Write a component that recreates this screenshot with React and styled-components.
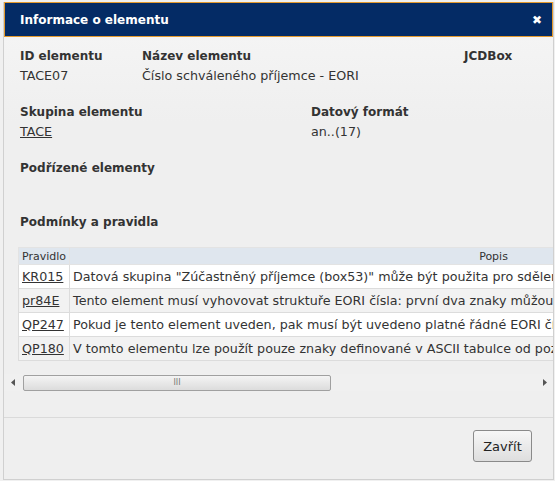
import React from "react";
import styled, { createGlobalStyle } from "styled-components";

const Global = createGlobalStyle`
  html, body { margin: 0; padding: 0; background: #f0f0f0; }
  body { font-family: "DejaVu Sans", Verdana, sans-serif; font-size: 12.7px; color: #333; }
`;

const Dialog = styled.div`
  width: 551px;
  height: 478px;
  margin: 2px 0 0 3px;
  border: 1px solid #d0d0d0;
  border-top: none;
  box-sizing: border-box;
  background: linear-gradient(#f6f6f6, #efefef 120px);
  display: flex;
  flex-direction: column;
  overflow: hidden;
`;

const TitleBar = styled.div`
  height: 35px;
  box-sizing: border-box;
  background: #042b65;
  border: 1px solid #e49a2e;
  display: flex;
  align-items: center;
  justify-content: space-between;
  padding: 0 10px 0 15px;
  color: #fff;
  font-weight: bold;
  font-size: 12px;
`;

const Close = styled.span`
  font-size: 12px;
  line-height: 1;
`;

const Body = styled.div`
  flex: 1;
  display: flex;
  flex-direction: column;
  padding: 10px 0 0 16px;
  line-height: 19px;
`;

const InfoRow = styled.div`
  display: grid;
  grid-template-columns: ${(p) => p.$cols};
  margin-bottom: ${(p) => p.$mb || 0}px;
`;

const Label = styled.div`
  font-weight: bold;
  font-size: 12px;
`;

const Value = styled.div``;

const Link = styled.a`
  color: #333;
  text-decoration: underline;
`;

const SectionTitle = styled.div`
  font-weight: bold;
  font-size: 12px;
  margin-bottom: ${(p) => p.$mb || 0}px;
`;

const TableScroll = styled.div`
  overflow: hidden;
  margin-left: -2px;
`;

const Table = styled.table`
  width: 900px;
  border-collapse: collapse;
  white-space: nowrap;
`;

const Th = styled.th`
  background: #dfe6ee;
  font-weight: normal;
  font-size: 11px;
  color: #333;
  height: 16px;
  line-height: 15px;
  padding: 0 3px;
  text-align: ${(p) => p.$align || "left"};
  border: 1px solid #e3e3e3;
`;

const Tr = styled.tr`
  background: ${(p) => (p.$alt ? "#f2f2f2" : "#fff")};
`;

const Td = styled.td`
  height: 23px;
  padding: 0 2px 0 3px;
  border: 1px solid #dcdcdc;
  width: ${(p) => p.$w || "auto"};
`;

const Scrollbar = styled.div`
  margin: 13px 0 0 -16px;
  height: 17px;
  display: flex;
  align-items: center;
  background: #f0f0f0;
`;

const Arrow = styled.div`
  width: 17px;
  height: 17px;
  display: flex;
  align-items: center;
  justify-content: center;
`;

const Track = styled.div`
  flex: 1;
  height: 15px;
  position: relative;
`;

const Thumb = styled.div`
  position: absolute;
  left: 2px;
  top: 0;
  width: 306px;
  height: 14px;
  border: 1px solid #a0a0a0;
  border-radius: 2px;
  background: linear-gradient(#f4f4f4, #dcdcdc);
  display: flex;
  align-items: center;
  justify-content: center;
`;

const Grip = styled.span`
  font-size: 8px;
  color: #777;
  line-height: 1;
`;

const Footer = styled.div`
  margin: auto 0 0 -16px;
  border-top: 1px solid #dadada;
  height: 62px;
  display: flex;
  justify-content: flex-end;
  align-items: flex-start;
  padding: 12px 21px 0 0;
  box-sizing: border-box;
`;

const Button = styled.button`
  width: 59px;
  height: 32px;
  border: 1px solid #8a8a8a;
  border-radius: 3px;
  background: linear-gradient(#f7f7f7, #dedede);
  font-family: inherit;
  font-size: 13px;
  color: #222;
  padding: 0;
`;

const rules = [
  ["KR015", "Datová skupina \"Zúčastněný příjemce (box53)\" může být použita pro sdělení"],
  ["pr84E", "Tento element musí vyhovovat struktuře EORI čísla: první dva znaky můžou"],
  ["QP247", "Pokud je tento element uveden, pak musí být uvedeno platné řádné EORI čí"],
  ["QP180", "V tomto elementu lze použít pouze znaky definované v ASCII tabulce od pozi"],
];

export default function App() {
  return (
    <>
      <Global />
      <Dialog>
        <TitleBar>
          <span>Informace o elementu</span>
          <Close>✖</Close>
        </TitleBar>
        <Body>
          <InfoRow $cols="122px 322px 1fr" $mb={18}>
            <div>
              <Label>ID elementu</Label>
              <Value>TACE07</Value>
            </div>
            <div>
              <Label>Název elementu</Label>
              <Value>Číslo schváleného příjemce - EORI</Value>
            </div>
            <div>
              <Label>JCDBox</Label>
            </div>
          </InfoRow>
          <InfoRow $cols="291px 1fr" $mb={18}>
            <div>
              <Label>Skupina elementu</Label>
              <Value><Link>TACE</Link></Value>
            </div>
            <div>
              <Label>Datový formát</Label>
              <Value>an..(17)</Value>
            </div>
          </InfoRow>
          <SectionTitle $mb={35}>Podřízené elementy</SectionTitle>
          <SectionTitle $mb={15}>Podmínky a pravidla</SectionTitle>
          <TableScroll>
            <Table>
              <thead>
                <tr>
                  <Th>Pravidlo</Th>
                  <Th $align="center">Popis</Th>
                </tr>
              </thead>
              <tbody>
                {rules.map(([code, text], i) => (
                  <Tr key={code} $alt={i % 2 === 1}>
                    <Td $w="41px"><Link>{code}</Link></Td>
                    <Td>{text}</Td>
                  </Tr>
                ))}
              </tbody>
            </Table>
          </TableScroll>
          <Scrollbar>
            <Arrow>
              <svg width="4" height="7" viewBox="0 0 4 7"><path d="M4 0 L0 3.5 L4 7 Z" fill="#555" /></svg>
            </Arrow>
            <Track>
              <Thumb><Grip>III</Grip></Thumb>
            </Track>
            <Arrow>
              <svg width="4" height="7" viewBox="0 0 4 7"><path d="M0 0 L4 3.5 L0 7 Z" fill="#555" /></svg>
            </Arrow>
          </Scrollbar>
          <Footer>
            <Button>Zavřít</Button>
          </Footer>
        </Body>
      </Dialog>
    </>
  );
}
